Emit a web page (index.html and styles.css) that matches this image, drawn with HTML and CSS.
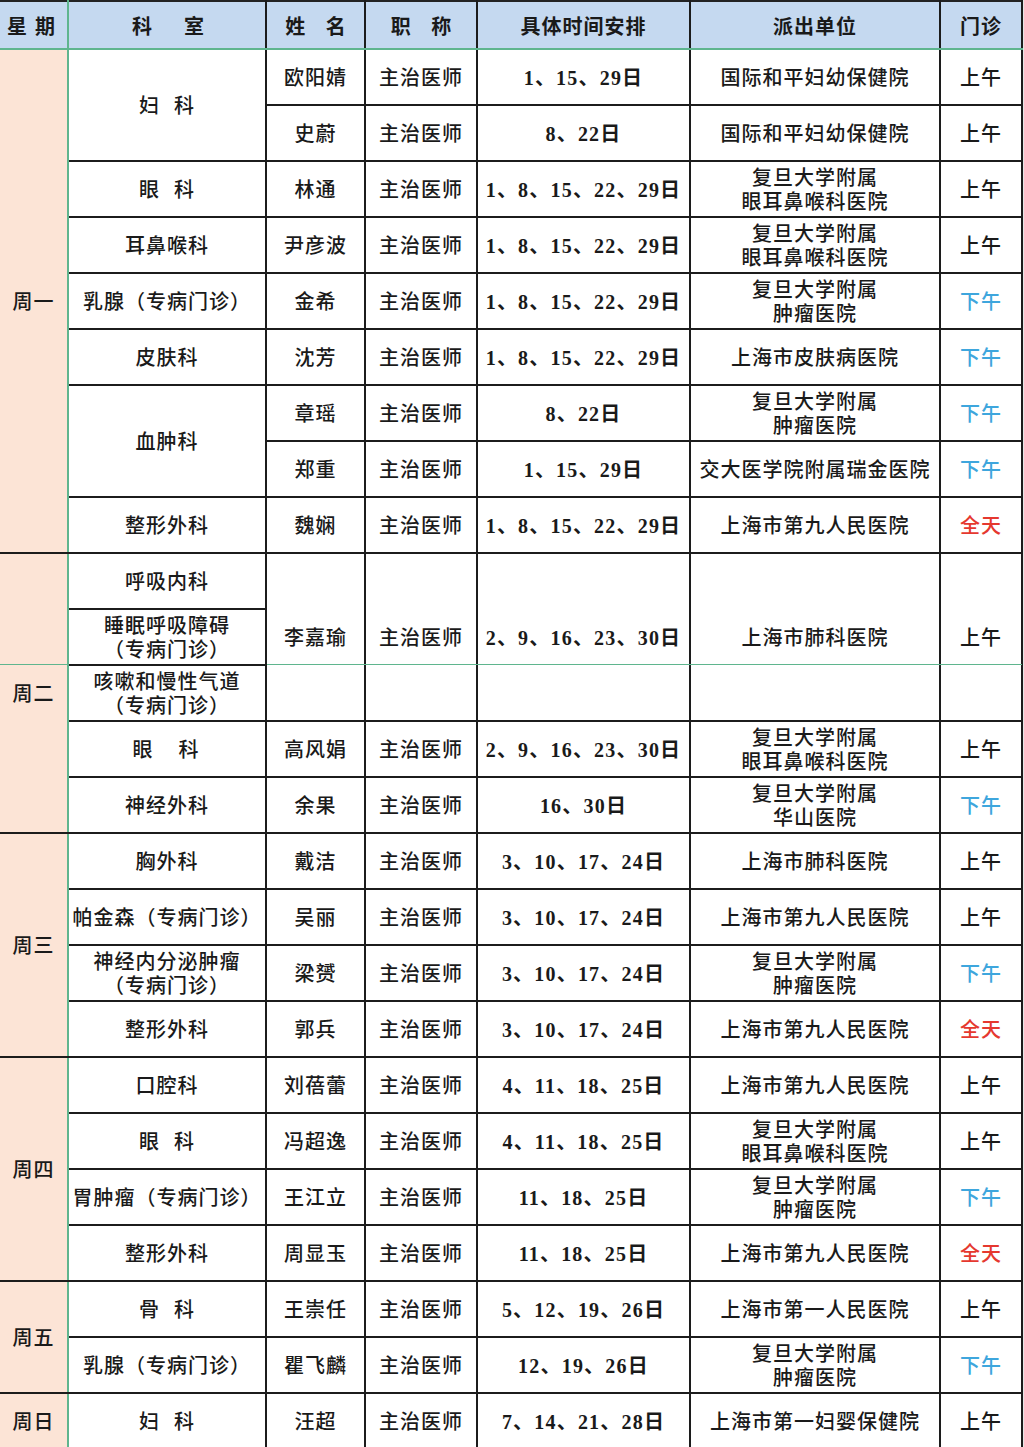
FILE: index.html
```html
<!DOCTYPE html>
<html lang="zh-CN">
<head>
<meta charset="utf-8">
<title>专家门诊安排</title>
<link rel="stylesheet" href="styles.css">
</head>
<body>
<div class="sheet">
<table class="grid">
<colgroup>
<col class="c-day"><col class="c-dept"><col class="c-name"><col class="c-title"><col class="c-time"><col class="c-unit"><col class="c-clinic">
</colgroup>
<thead>
<tr class="head">
<th class="day-h">星期</th><th class="wide-h">科　室</th><th>姓 名</th><th>职 称</th><th class="tight">具体时间安排</th><th class="tight">派出单位</th><th class="tight">门诊</th>
</tr>
</thead>
<tbody>
<tr>
<td class="day" rowspan="9">周一</td>
<td rowspan="2" class="sp">妇 科</td><td>欧阳婧</td><td>主治医师</td><td class="time">1、15、29日</td><td>国际和平妇幼保健院</td><td>上午</td>
</tr>
<tr>
<td>史蔚</td><td>主治医师</td><td class="time">8、22日</td><td>国际和平妇幼保健院</td><td>上午</td>
</tr>
<tr>
<td class="sp">眼 科</td><td>林通</td><td>主治医师</td><td class="time">1、8、15、22、29日</td><td class="two">复旦大学附属<br>眼耳鼻喉科医院</td><td>上午</td>
</tr>
<tr>
<td>耳鼻喉科</td><td>尹彦波</td><td>主治医师</td><td class="time">1、8、15、22、29日</td><td class="two">复旦大学附属<br>眼耳鼻喉科医院</td><td>上午</td>
</tr>
<tr>
<td>乳腺（专病门诊）</td><td>金希</td><td>主治医师</td><td class="time">1、8、15、22、29日</td><td class="two">复旦大学附属<br>肿瘤医院</td><td class="pm">下午</td>
</tr>
<tr>
<td>皮肤科</td><td>沈芳</td><td>主治医师</td><td class="time">1、8、15、22、29日</td><td>上海市皮肤病医院</td><td class="pm">下午</td>
</tr>
<tr>
<td rowspan="2">血肿科</td><td>章瑶</td><td>主治医师</td><td class="time">8、22日</td><td class="two">复旦大学附属<br>肿瘤医院</td><td class="pm">下午</td>
</tr>
<tr>
<td>郑重</td><td>主治医师</td><td class="time">1、15、29日</td><td>交大医学院附属瑞金医院</td><td class="pm">下午</td>
</tr>
<tr>
<td>整形外科</td><td>魏娴</td><td>主治医师</td><td class="time">1、8、15、22、29日</td><td>上海市第九人民医院</td><td class="all">全天</td>
</tr>
<tr>
<td class="day" rowspan="5">周二</td>
<td>呼吸内科</td><td rowspan="3">李嘉瑜</td><td rowspan="3">主治医师</td><td rowspan="3" class="time">2、9、16、23、30日</td><td rowspan="3">上海市肺科医院</td><td rowspan="3">上午</td>
</tr>
<tr>
<td class="two">睡眠呼吸障碍<br>（专病门诊）</td>
</tr>
<tr>
<td class="two">咳嗽和慢性气道<br>（专病门诊）</td>
</tr>
<tr>
<td class="sp2">眼　科</td><td>高风娟</td><td>主治医师</td><td class="time">2、9、16、23、30日</td><td class="two">复旦大学附属<br>眼耳鼻喉科医院</td><td>上午</td>
</tr>
<tr>
<td>神经外科</td><td>余果</td><td>主治医师</td><td class="time">16、30日</td><td class="two">复旦大学附属<br>华山医院</td><td class="pm">下午</td>
</tr>
<tr>
<td class="day" rowspan="4">周三</td>
<td>胸外科</td><td>戴洁</td><td>主治医师</td><td class="time">3、10、17、24日</td><td>上海市肺科医院</td><td>上午</td>
</tr>
<tr>
<td>帕金森（专病门诊）</td><td>吴丽</td><td>主治医师</td><td class="time">3、10、17、24日</td><td>上海市第九人民医院</td><td>上午</td>
</tr>
<tr>
<td class="two">神经内分泌肿瘤<br>（专病门诊）</td><td>梁赟</td><td>主治医师</td><td class="time">3、10、17、24日</td><td class="two">复旦大学附属<br>肿瘤医院</td><td class="pm">下午</td>
</tr>
<tr>
<td>整形外科</td><td>郭兵</td><td>主治医师</td><td class="time">3、10、17、24日</td><td>上海市第九人民医院</td><td class="all">全天</td>
</tr>
<tr>
<td class="day" rowspan="4">周四</td>
<td>口腔科</td><td>刘蓓蕾</td><td>主治医师</td><td class="time">4、11、18、25日</td><td>上海市第九人民医院</td><td>上午</td>
</tr>
<tr>
<td class="sp">眼 科</td><td>冯超逸</td><td>主治医师</td><td class="time">4、11、18、25日</td><td class="two">复旦大学附属<br>眼耳鼻喉科医院</td><td>上午</td>
</tr>
<tr>
<td>胃肿瘤（专病门诊）</td><td>王江立</td><td>主治医师</td><td class="time">11、18、25日</td><td class="two">复旦大学附属<br>肿瘤医院</td><td class="pm">下午</td>
</tr>
<tr>
<td>整形外科</td><td>周显玉</td><td>主治医师</td><td class="time">11、18、25日</td><td>上海市第九人民医院</td><td class="all">全天</td>
</tr>
<tr>
<td class="day" rowspan="2">周五</td>
<td class="sp">骨 科</td><td>王崇任</td><td>主治医师</td><td class="time">5、12、19、26日</td><td>上海市第一人民医院</td><td>上午</td>
</tr>
<tr>
<td>乳腺（专病门诊）</td><td>瞿飞麟</td><td>主治医师</td><td class="time">12、19、26日</td><td class="two">复旦大学附属<br>肿瘤医院</td><td class="pm">下午</td>
</tr>
<tr>
<td class="day">周日</td>
<td class="sp">妇 科</td><td>汪超</td><td>主治医师</td><td class="time">7、14、21、28日</td><td>上海市第一妇婴保健院</td><td>上午</td>
</tr>
</tbody>
</table>
<div class="seam seam-day"></div>
<div class="seam seam-rest"></div>
</div>
</body>
</html>
```
FILE: styles.css
```css
html, body {
  margin: 0;
  padding: 0;
  background: #e6e6e6;
}
.sheet {
  position: relative;
  width: 1022px;
  background: #ffffff;
}
.grid {
  width: 1022px;
  border-collapse: collapse;
  table-layout: fixed;
  font-family: "Liberation Serif", "Noto Sans CJK SC", serif;
  color: #1a1a1a;
}
.c-day { width: 68px; }
.c-dept { width: 198px; }
.c-name { width: 99px; }
.c-title { width: 112px; }
.c-time { width: 213px; }
.c-unit { width: 250px; }
.c-clinic { width: 82px; }

.grid th,
.grid td {
  border: 2px solid #1c1c1c;
  padding: 0;
  text-align: center;
  vertical-align: middle;
  overflow: hidden;
  white-space: nowrap;
}
.grid td {
  height: 52px;
  padding-top: 2px;
  font-size: 20px;
  font-weight: 500;
  letter-spacing: 1px;
  line-height: 24px;
}
.head th {
  height: 46px;
  background: #c5d9f0;
  font-family: "Noto Sans CJK SC", sans-serif;
  font-size: 20px;
  font-weight: 700;
  letter-spacing: 8px;
  border-top: 2px solid #222;
  border-bottom: 2px solid #5fb58e;
  padding-left: 8px;
}
.head th.day-h {
  text-align: left;
  letter-spacing: 8px;
  padding-left: 7px;
}
.head th.wide-h {
  letter-spacing: 6px;
}
.head th.tight {
  letter-spacing: 1px;
  padding-left: 0;
}
.head th:first-child {
  border-left: none;
  border-right: 2px solid #5fb58e;
}
.grid td.day {
  background: #fce4d6;
  border-left: none;
  border-right: 2px solid #5fb58e;
  letter-spacing: 1px;
}
.grid td.time {
  font-weight: 700;
  letter-spacing: 1.2px;
}
.grid td.sp {
  word-spacing: 8px;
}
.grid td.sp2 {
  letter-spacing: 3px;
}
.grid td.pm {
  color: #3ea6dd;
}
.grid td.all {
  color: #e5382f;
}
.seam {
  position: absolute;
  top: 664px;
  height: 1px;
  background: #5fb58e;
}
.seam-day {
  left: 0;
  width: 67px;
}
.seam-rest {
  left: 267px;
  width: 755px;
}
```
